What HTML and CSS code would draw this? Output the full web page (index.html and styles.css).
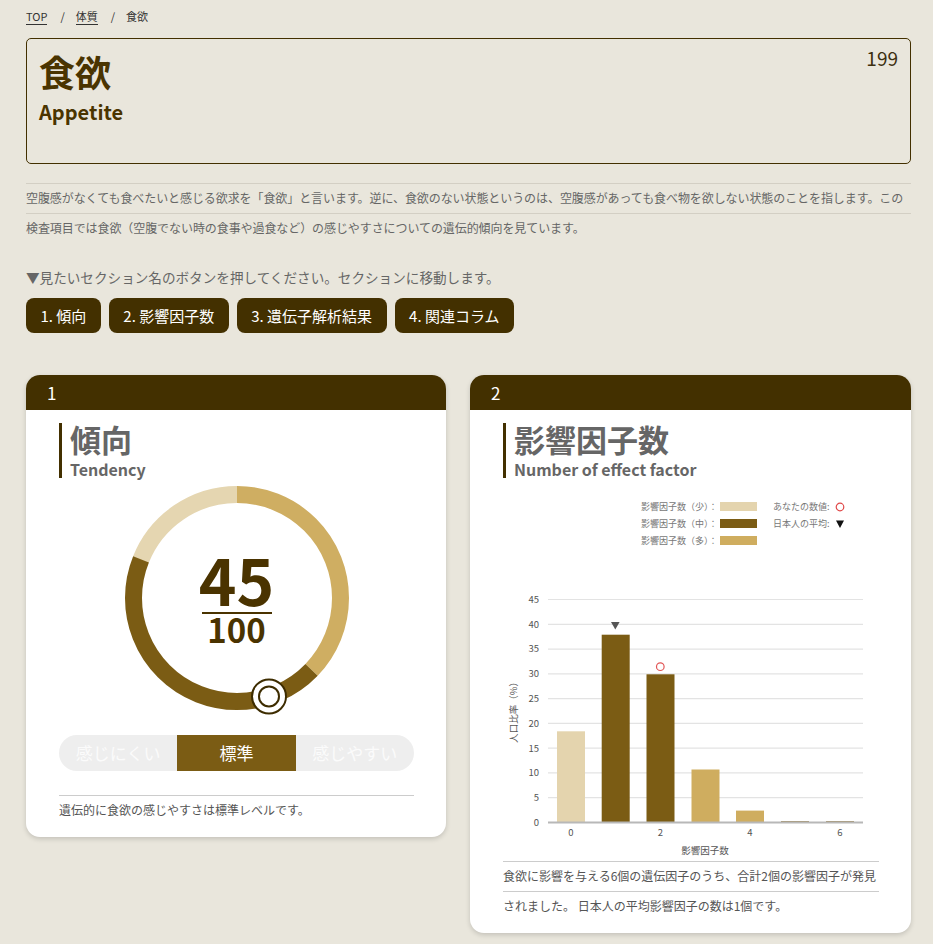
FILE: index.html
```html
<!DOCTYPE html>
<html lang="ja">
<head>
<meta charset="utf-8">
<title>食欲 | Appetite</title>
<link rel="stylesheet" href="styles.css">
</head>
<body>
<div class="page">
  <nav class="crumbs">
    <a class="crumb-link" href="#">TOP</a><span class="sep">/</span><a class="crumb-link" href="#">体質</a><span class="sep">/</span><span>食欲</span>
  </nav>

  <header class="hero">
    <div>
      <h1 class="hero-title">食欲</h1>
      <p class="hero-en">Appetite</p>
    </div>
    <div class="hero-num">199</div>
  </header>

  <p class="desc">空腹感がなくても食べたいと感じる欲求を「食欲」と言います。逆に、食欲のない状態というのは、空腹感があっても食べ物を欲しない状態のことを指します。この検査項目では食欲（空腹でない時の食事や過食など）の感じやすさについての遺伝的傾向を見ています。</p>

  <p class="guide">▼見たいセクション名のボタンを押してください。セクションに移動します。</p>

  <div class="jump">
    <a class="jump-btn" href="#s1">1. 傾向</a>
    <a class="jump-btn" href="#s2">2. 影響因子数</a>
    <a class="jump-btn" href="#s3">3. 遺伝子解析結果</a>
    <a class="jump-btn" href="#s4">4. 関連コラム</a>
  </div>

  <div class="cards">
    <section class="card card-1" id="s1">
      <div class="card-head">1</div>
      <div class="card-body">
        <div class="sec-title">
          <h2>傾向</h2>
          <p>Tendency</p>
        </div>

        <div class="donut">
          <svg class="ring" width="240" height="240" viewBox="0 0 240 240">
            <g transform="rotate(-90 120 120)" fill="none" stroke-width="17">
              <circle cx="120" cy="120" r="103.5" pathLength="100" stroke="#e5d6b1" stroke-dasharray="19 81" stroke-dashoffset="-81"/>
              <circle cx="120" cy="120" r="103.5" pathLength="100" stroke="#cfae62" stroke-dasharray="37.2 62.8"/>
              <circle cx="120" cy="120" r="103.5" pathLength="100" stroke="#7b5c14" stroke-dasharray="43.9 56.1" stroke-dashoffset="-37.2"/>
            </g>
            <circle cx="152" cy="218.4" r="17" fill="#fff" stroke="#3d2c00" stroke-width="2"/>
            <circle cx="152" cy="218.4" r="10" fill="#fff" stroke="#3d2c00" stroke-width="2"/>
          </svg>
          <div class="score">
            <div class="score-num">45</div>
            <div class="score-rule"></div>
            <div class="score-den">100</div>
          </div>
        </div>

        <div class="seg">
          <span>感じにくい</span>
          <span class="on">標準</span>
          <span>感じやすい</span>
        </div>

        <p class="lined note-1">遺伝的に食欲の感じやすさは標準レベルです。</p>
      </div>
    </section>

    <section class="card card-2" id="s2">
      <div class="card-head">2</div>
      <div class="card-body">
        <div class="sec-title">
          <h2>影響因子数</h2>
          <p>Number of effect factor</p>
        </div>

        <div class="legend">
          <div class="legend-col">
            <div class="legend-row"><span class="lg-label">影響因子数（少）：</span><i class="sw sw-low"></i></div>
            <div class="legend-row"><span class="lg-label">影響因子数（中）：</span><i class="sw sw-mid"></i></div>
            <div class="legend-row"><span class="lg-label">影響因子数（多）：</span><i class="sw sw-high"></i></div>
          </div>
          <div class="legend-col">
            <div class="legend-row"><span>あなたの数値:</span>
              <svg class="lg-icon" width="10" height="10" viewBox="0 0 10 10"><circle cx="5" cy="5" r="3.8" fill="none" stroke="#e04848" stroke-width="1.2"/></svg>
            </div>
            <div class="legend-row"><span>日本人の平均:</span>
              <svg class="lg-icon" width="10" height="10" viewBox="0 0 10 10"><polygon points="1,1.5 9,1.5 5,9" fill="#111"/></svg>
            </div>
          </div>
        </div>

        <svg class="chart" width="376" height="270" viewBox="503 590 376 270">
          <g stroke="#e3e3e3" stroke-width="1.2">
            <line x1="548" x2="863" y1="599.5" y2="599.5"/>
            <line x1="548" x2="863" y1="624.3" y2="624.3"/>
            <line x1="548" x2="863" y1="649.1" y2="649.1"/>
            <line x1="548" x2="863" y1="673.8" y2="673.8"/>
            <line x1="548" x2="863" y1="698.6" y2="698.6"/>
            <line x1="548" x2="863" y1="723.4" y2="723.4"/>
            <line x1="548" x2="863" y1="748.2" y2="748.2"/>
            <line x1="548" x2="863" y1="772.9" y2="772.9"/>
            <line x1="548" x2="863" y1="797.7" y2="797.7"/>
          </g>
          <g class="tick" text-anchor="end">
            <text x="539" y="602.8">45</text>
            <text x="539" y="627.6">40</text>
            <text x="539" y="652.4">35</text>
            <text x="539" y="677.1">30</text>
            <text x="539" y="701.9">25</text>
            <text x="539" y="726.7">20</text>
            <text x="539" y="751.5">15</text>
            <text x="539" y="776.2">10</text>
            <text x="539" y="801">5</text>
            <text x="539" y="825.8">0</text>
          </g>
          <rect x="557" y="731.3" width="28" height="91.2" fill="#e4d4ae"/>
          <rect x="601.7" y="634.7" width="28" height="187.8" fill="#7b5c14"/>
          <rect x="646.5" y="674.3" width="28" height="148.2" fill="#7b5c14"/>
          <rect x="691.5" y="769.5" width="28" height="53" fill="#cfad5f"/>
          <rect x="736" y="810.6" width="28" height="11.9" fill="#cfad5f"/>
          <rect x="781" y="821" width="28" height="1.5" fill="#a08a5a"/>
          <rect x="826" y="821" width="28" height="1.5" fill="#a08a5a"/>
          <line x1="548" x2="863" y1="822.5" y2="822.5" stroke="#b8b8b8" stroke-width="2"/>
          <g class="tick" text-anchor="middle">
            <text x="571" y="836">0</text>
            <text x="660.5" y="836">2</text>
            <text x="750" y="836">4</text>
            <text x="840" y="836">6</text>
            <text x="705" y="854">影響因子数</text>
            <text transform="translate(517 710) rotate(-90)">人口比率（%）</text>
          </g>
          <polygon points="611,622 619.6,622 615.3,629.6" fill="#555"/>
          <circle cx="660.3" cy="666.7" r="3.8" fill="none" stroke="#e25555" stroke-width="1.2"/>
        </svg>

        <p class="lined note-2">食欲に影響を与える6個の遺伝因子のうち、合計2個の影響因子が発見されました。 日本人の平均影響因子の数は1個です。</p>
      </div>
    </section>
  </div>
</div>
</body>
</html>
```

FILE: styles.css
```css
* {
  box-sizing: border-box;
  margin: 0;
  padding: 0;
}

body {
  background: #e9e6dc;
  font-family: "Noto Sans CJK JP", "Noto Sans", sans-serif;
  color: #555;
}

.page {
  width: 885px;
  margin-left: 26px;
  padding-bottom: 40px;
}

/* breadcrumbs */
.crumbs {
  padding-top: 8px;
  font-size: 11px;
  line-height: 16px;
  color: #333;
}

.crumb-link {
  color: #333;
  text-decoration: none;
  border-bottom: 1px solid #333;
}

.sep {
  margin: 0 11px 0 13px;
}

/* hero */
.hero {
  margin-top: 14px;
  height: 126px;
  border: 1px solid #433000;
  border-radius: 5px;
  padding: 11px 12px 0 12px;
  display: flex;
  justify-content: space-between;
  align-items: flex-start;
}

.hero-title {
  font-size: 36px;
  line-height: 43px;
  font-weight: 700;
  color: #4a3400;
}

.hero-en {
  margin-top: 7px;
  font-size: 20px;
  line-height: 24px;
  font-weight: 700;
  color: #4a3400;
}

.hero-num {
  margin-top: -4px;
  font-size: 19px;
  line-height: 24px;
  color: #3d3010;
}

/* description */
.desc {
  margin-top: 19px;
  font-size: 12px;
  letter-spacing: -0.08px;
  line-height: 30px;
  color: #666;
  background: repeating-linear-gradient(to bottom, #d3cfc4 0 1px, transparent 1px 30px);
}

.guide {
  margin-top: 24px;
  font-size: 13.6px;
  line-height: 20px;
  color: #666;
}

.jump {
  margin-top: 11px;
  display: flex;
  gap: 8px;
}

.jump-btn {
  display: block;
  height: 35px;
  line-height: 35px;
  padding: 0 14.5px;
  border-radius: 8px;
  background: #433000;
  color: #fff;
  font-size: 15px;
  text-decoration: none;
}

/* cards */
.cards {
  margin-top: 42px;
  display: grid;
  grid-template-columns: 420px 441px;
  gap: 24px;
  align-items: start;
}

.card {
  background: #fff;
  border-radius: 14px;
  overflow: hidden;
  box-shadow: 0 2px 5px rgba(0, 0, 0, 0.16);
}

.card-head {
  background: #433000;
  color: #fff;
  height: 35px;
  line-height: 35px;
  padding-left: 21px;
  font-size: 17px;
}

.card-body {
  padding: 13px 32px 12px 33px;
}

.sec-title {
  border-left: 3px solid #433000;
  padding-left: 8px;
}

.sec-title h2 {
  font-size: 31px;
  line-height: 31px;
  font-weight: 700;
  color: #666;
}

.sec-title p {
  margin-top: 7px;
  font-size: 16px;
  line-height: 17px;
  font-weight: 700;
  color: #666;
}

/* donut */
.donut {
  display: grid;
  place-items: center;
  height: 240px;
}

.ring {
  grid-area: 1 / 1;
  display: block;
}

.score {
  grid-area: 1 / 1;
  margin-top: 4px;
  display: flex;
  flex-direction: column;
  align-items: center;
  color: #4a3300;
  font-weight: 700;
}

.score-num {
  font-size: 64px;
  line-height: 44px;
}

.score-rule {
  width: 70px;
  height: 2px;
  margin-top: 12px;
  background: #4a3300;
}

.score-den {
  font-size: 33px;
  line-height: 30px;
}

/* segmented */
.seg {
  margin-top: 17px;
  display: flex;
  height: 36px;
  border-radius: 18px;
  background: #eeeeee;
  overflow: hidden;
}

.seg span {
  flex: 1;
  text-align: center;
  line-height: 36px;
  font-size: 17px;
  color: #fbfbfb;
}

.seg .on {
  background: #7b5c14;
  color: #fff;
}

/* lined notes */
.lined {
  font-size: 12px;
  line-height: 30px;
  color: #555;
  background: repeating-linear-gradient(to bottom, #cccccc 0 1px, transparent 1px 30px);
}

.note-1 {
  margin-top: 24px;
}

.note-2 {
  margin-top: 1px;
}

/* legend */
.legend {
  margin-top: 20px;
  margin-left: 138px;
  display: flex;
  gap: 16px;
  font-size: 9px;
  line-height: 17px;
  color: #777;
}

.legend-col {
  display: flex;
  flex-direction: column;
}

.legend-row {
  display: flex;
  align-items: center;
}

.lg-label {
  width: 79px;
  white-space: nowrap;
}

.sw {
  display: block;
  width: 37px;
  height: 9px;
}

.sw-low { background: #e4d4ae; }
.sw-mid { background: #7b5c14; }
.sw-high { background: #cfad5f; }

.lg-icon {
  display: block;
  margin-left: 5px;
}

/* chart */
.chart {
  display: block;
  margin-top: 41px;
}

.tick {
  font-size: 9.5px;
  fill: #555;
}
```
